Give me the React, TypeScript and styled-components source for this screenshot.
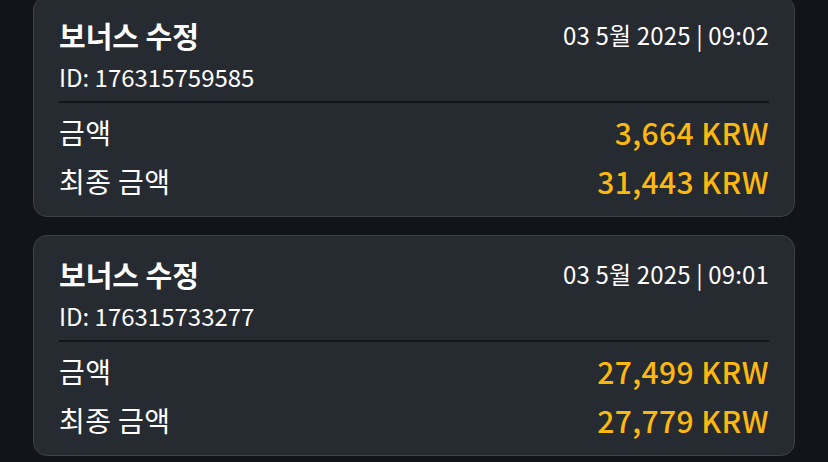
import styled, { createGlobalStyle } from 'styled-components'
import React from 'react'

const GlobalStyle = createGlobalStyle`
  html, body {
    margin: 0;
    padding: 0;
    background: #11151b;
  }
  body {
    font-family: 'Noto Sans CJK KR', 'Noto Sans', sans-serif;
    color: #ffffff;
  }
`

const Page = styled.div`
  width: 828px;
  height: 462px;
  overflow: hidden;
  padding: 0 33px;
  box-sizing: border-box;
`

const List = styled.div`
  display: flex;
  flex-direction: column;
  gap: 18px;
  margin-top: -4px;
`

const Card = styled.div`
  background: #262a31;
  border: 1px solid #3f4146;
  border-radius: 14px;
  padding: 18px 25px 11px;
`

const Header = styled.div`
  display: flex;
  justify-content: space-between;
  align-items: center;
  height: 40px;
`

const Title = styled.div`
  font-size: 29px;
  font-weight: 700;
  line-height: 40px;
`

const DateText = styled.div`
  font-size: 24px;
  line-height: 40px;
  letter-spacing: 0.15px;
`

const IdText = styled.div`
  margin-top: 4px;
  font-size: 24px;
  line-height: 36px;
  padding-bottom: 6px;
  border-bottom: 2px solid #12151a;
`

const Rows = styled.div`
  display: flex;
  flex-direction: column;
  padding-top: 4px;
`

const Row = styled.div`
  display: flex;
  justify-content: space-between;
  align-items: center;
  height: 49px;
`

const Label = styled.span`
  font-size: 28px;
  letter-spacing: 0.4px;
`

const Amount = styled.span`
  font-size: 30px;
  font-weight: 500;
  letter-spacing: 0.4px;
  color: #fbb80f;
`

interface Entry {
  id: string
  date: string
  amount: string
  total: string
}

const entries: Entry[] = [
  { id: '176315759585', date: '03 5월 2025 | 09:02', amount: '3,664 KRW', total: '31,443 KRW' },
  { id: '176315733277', date: '03 5월 2025 | 09:01', amount: '27,499 KRW', total: '27,779 KRW' },
]

const App = () => {
  return (
    <>
      <GlobalStyle />
      <Page>
        <List>
          {entries.map((e) => (
            <Card key={e.id}>
              <Header>
                <Title>보너스 수정</Title>
                <DateText>{e.date}</DateText>
              </Header>
              <IdText>ID: {e.id}</IdText>
              <Rows>
                <Row>
                  <Label>금액</Label>
                  <Amount>{e.amount}</Amount>
                </Row>
                <Row>
                  <Label>최종 금액</Label>
                  <Amount>{e.total}</Amount>
                </Row>
              </Rows>
            </Card>
          ))}
        </List>
      </Page>
    </>
  )
}

export default App
